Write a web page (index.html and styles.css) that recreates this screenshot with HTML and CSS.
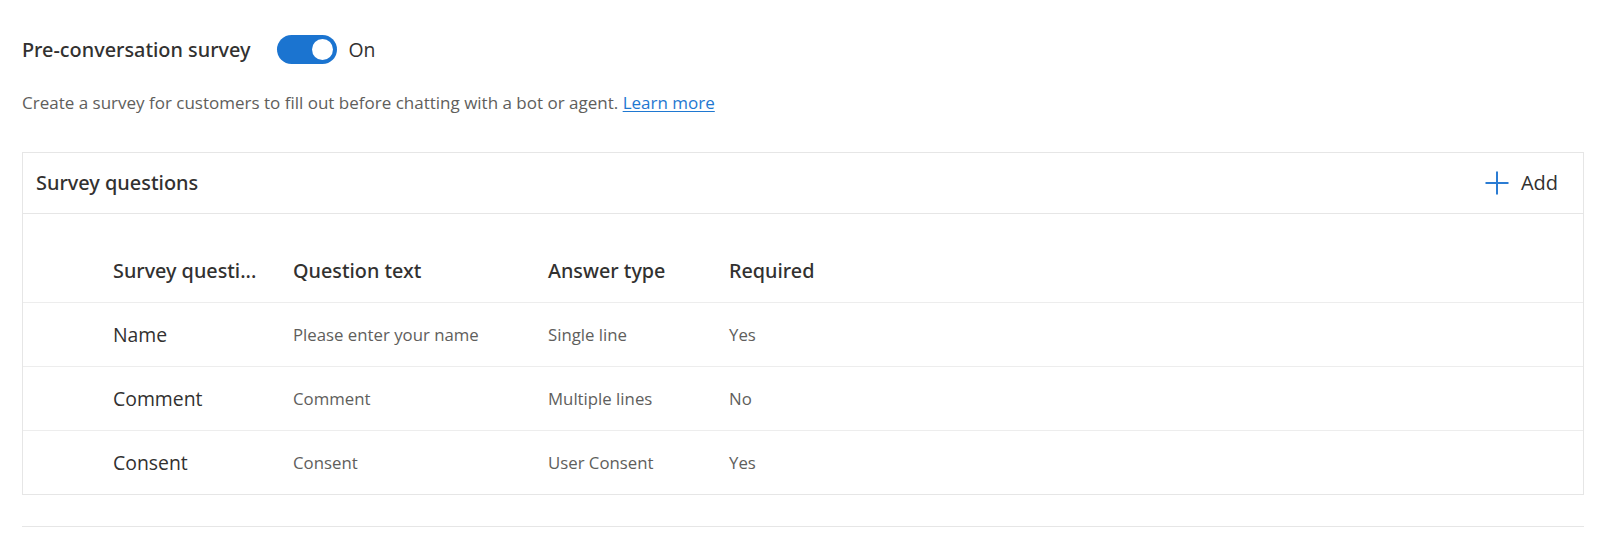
FILE: index.html
```html
<!DOCTYPE html>
<html lang="en">
<head>
<meta charset="utf-8">
<title>Pre-conversation survey</title>
<link rel="stylesheet" href="styles.css">
</head>
<body>
<main class="page">
  <div class="title-row">
    <h1 class="title">Pre-conversation survey</h1>
    <div class="toggle" role="switch" aria-checked="true"><span class="knob"></span></div>
    <span class="toggle-label">On</span>
  </div>
  <p class="desc">Create a survey for customers to fill out before chatting with a bot or agent. <a class="link" href="#">Learn more</a></p>

  <section class="card">
    <header class="card-head">
      <h2 class="card-title">Survey questions</h2>
      <button class="add-btn" type="button">
        <svg class="plus" width="24" height="24" viewBox="0 0 24 24" aria-hidden="true">
          <path d="M12 0.5V23.5M0.5 12H23.5" stroke="#2b7cd3" stroke-width="2" fill="none"/>
        </svg>
        <span>Add</span>
      </button>
    </header>
    <div class="table">
      <div class="row head">
        <div class="cell">Survey questi...</div>
        <div class="cell">Question text</div>
        <div class="cell">Answer type</div>
        <div class="cell">Required</div>
      </div>
      <div class="row">
        <div class="cell name">Name</div>
        <div class="cell">Please enter your name</div>
        <div class="cell">Single line</div>
        <div class="cell">Yes</div>
      </div>
      <div class="row">
        <div class="cell name">Comment</div>
        <div class="cell">Comment</div>
        <div class="cell">Multiple lines</div>
        <div class="cell">No</div>
      </div>
      <div class="row last">
        <div class="cell name">Consent</div>
        <div class="cell">Consent</div>
        <div class="cell">User Consent</div>
        <div class="cell">Yes</div>
      </div>
    </div>
  </section>
  <hr class="divider">
</main>
</body>
</html>
```
FILE: styles.css
```css
* { box-sizing: border-box; }
html, body { margin: 0; padding: 0; background: #ffffff; }
body {
  font-family: "Open Sans", "Noto Sans", sans-serif;
  color: #323130;
}
.page {
  padding: 35px 22px 0 22px;
}
.title-row {
  display: flex;
  align-items: center;
  height: 29px;
}
.title {
  margin: 0;
  font-family: "Noto Sans", "Open Sans", sans-serif;
  font-size: 19.85px;
  font-weight: 500;
  line-height: 29px;
  color: #323130;
}
.toggle {
  margin-left: 26px;
  width: 60px;
  height: 29px;
  border-radius: 15px;
  background: #1b74d0;
  display: flex;
  align-items: center;
  justify-content: flex-end;
  padding-right: 4px;
}
.knob {
  width: 21px;
  height: 21px;
  border-radius: 50%;
  background: #ffffff;
}
.toggle-label {
  margin-left: 12px;
  font-size: 19.4px;
  line-height: 29px;
  color: #323130;
}
.desc {
  margin: 27px 0 0 0;
  font-size: 17px;
  line-height: 24px;
  color: #605e5c;
}
.link {
  color: #1f78d1;
  text-decoration: underline;
  text-underline-offset: 2px;
}
.card {
  margin-top: 37px;
  border: 1px solid #e6e6e6;
}
.card-head {
  display: flex;
  align-items: center;
  justify-content: space-between;
  height: 61px;
  padding: 0 25px 0 13px;
  border-bottom: 1px solid #e6e6e6;
}
.card-title {
  margin: 0;
  font-family: "Noto Sans", "Open Sans", sans-serif;
  font-size: 19.9px;
  font-weight: 500;
  line-height: 28px;
  color: #323130;
}
.add-btn {
  display: flex;
  align-items: center;
  gap: 12px;
  border: 0;
  background: transparent;
  padding: 0;
  font-family: inherit;
  font-size: 20px;
  line-height: 28px;
  color: #323130;
  cursor: pointer;
}
.plus { display: block; }
.table {
  padding-top: 25px;
}
.row {
  display: grid;
  grid-template-columns: 180px 255px 181px 1fr;
  align-items: center;
  height: 64px;
  padding-left: 90px;
  border-bottom: 1px solid #ededed;
  font-size: 16.8px;
  color: #605e5c;
}
.row.last { border-bottom: 0; height: 63px; }
.row.head {
  font-family: "Noto Sans", "Open Sans", sans-serif;
  font-size: 19.8px;
  font-weight: 500;
  color: #323130;
}
.cell { white-space: nowrap; }
.cell.name {
  font-size: 19.4px;
  color: #323130;
}
.divider {
  margin: 31px 0 0 0;
  border: 0;
  border-top: 1px solid #e6e6e6;
  height: 0;
}
```
